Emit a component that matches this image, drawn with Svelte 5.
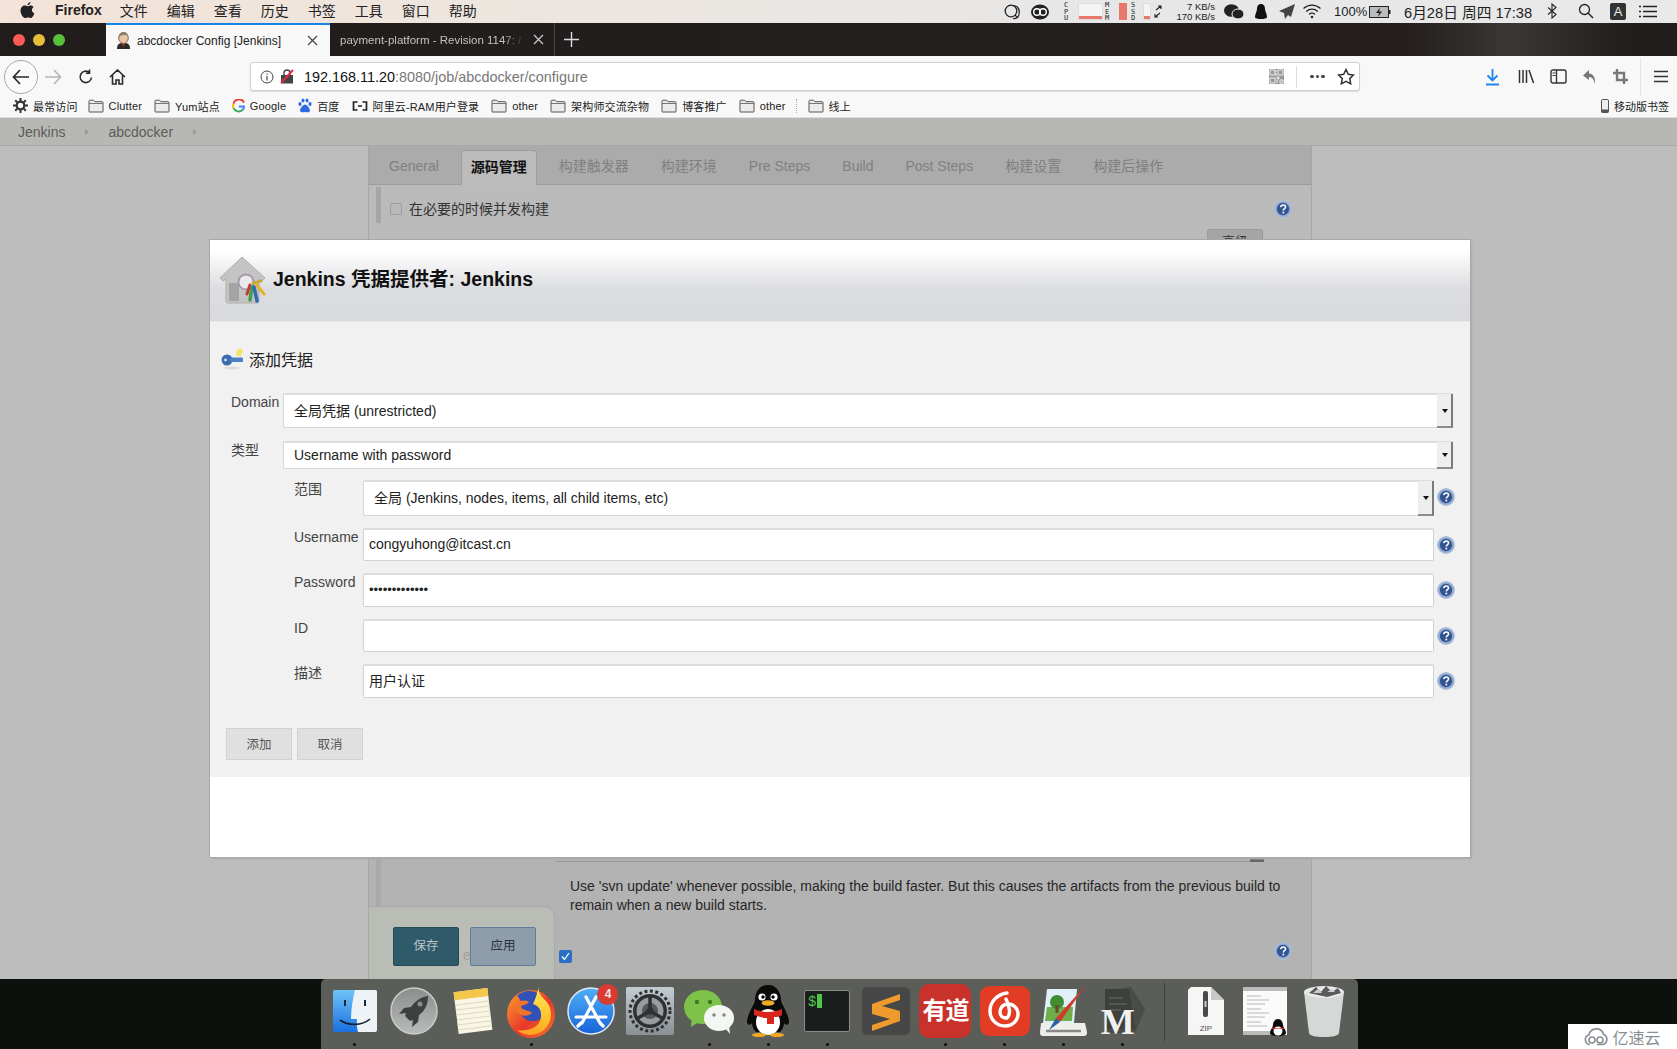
<script>
	const menus = ['文件', '编辑', '查看', '历史', '书签', '工具', '窗口', '帮助'];
	const tabs = ['General', '源码管理', '构建触发器', '构建环境', 'Pre Steps', 'Build', 'Post Steps', '构建设置', '构建后操作'];
	const marks = [
		{ label: 'Clutter' },
		{ label: 'Yum站点' },
		{ label: 'Google', icon: 'google' },
		{ label: '百度', icon: 'baidu' },
		{ label: '阿里云-RAM用户登录', icon: 'ali' },
		{ label: 'other' },
		{ label: '架构师交流杂物' },
		{ label: '博客推广' },
		{ label: 'other' }
	];
</script>

{#snippet help()}
	<svg class="help" width="18" height="18" viewBox="0 0 17 17">
		<circle cx="8.5" cy="8.5" r="7.9" fill="#8ea8d0" stroke="#b0c1dc" stroke-width="1" />
		<circle cx="8.5" cy="8.5" r="5.8" fill="#33558f" />
		<path d="M6.3 6.8c.2-1.5 1.2-2.1 2.4-2.1 1.3 0 2.2.8 2.2 1.9 0 1.6-2.1 1.6-2.1 3.2" fill="none" stroke="#fff" stroke-width="1.5" />
		<rect x="8" y="11" width="1.6" height="1.7" fill="#fff" />
	</svg>
{/snippet}

{#snippet folder()}
	<svg width="16" height="14" viewBox="0 0 16 14">
		<path d="M1 12.5V2.2C1 1.6 1.4 1.2 2 1.2h3.6l1.3 1.5H14c.6 0 1 .4 1 1v8.8c0 .3-.2.5-.5.5h-13c-.3 0-.5-.2-.5-.5z" fill="#ececec" stroke="#555" stroke-width="1" />
		<path d="M1 4.5h14" stroke="#777" stroke-width="1" />
	</svg>
{/snippet}

<div class="screen">
	<header class="menubar">
		<svg class="apple" width="15" height="17" viewBox="0 0 15 17">
			<path d="M10.4 0c.1 1.2-.9 3-2.900 3.200C7.300 1.800 8.700.2 10.400 0zM7.600 4.300c.8 0 1.700-.8 3.100-.8 1.100 0 2.300.6 3 1.600-2.600 1.500-2.200 5.200.6 6.300-.6 1.700-2 4.600-3.600 4.600-.9 0-1.400-.6-2.700-.6s-1.800.6-2.700.6C3.300 16 .5 12.200.5 8.700c0-3.100 2-5.100 4.100-5.100 1.300 0 2.300.7 3 .7z" fill="#222" />
		</svg>
		<b class="app">Firefox</b>
		{#each menus as m}
			<span class="menu">{m}</span>
		{/each}

		<div class="status">
			<svg class="st" style="left:1003px" width="18" height="18" viewBox="0 0 18 18"><circle cx="8" cy="8" r="5.800" fill="none" stroke="#222" stroke-width="1.300" /><path d="M12 12l3 3M11 2.500c4 1 6 4 5 9-.5 3-3 4.500-6 4" fill="none" stroke="#222" stroke-width="1.200" /></svg>
			<svg class="st" style="left:1030px" width="20" height="18" viewBox="0 0 20 18"><ellipse cx="10" cy="9" rx="9" ry="7.500" fill="#222" /><circle cx="7" cy="9" r="3.300" fill="none" stroke="#fff" stroke-width="1.400" /><circle cx="13" cy="9" r="3.300" fill="none" stroke="#fff" stroke-width="1.400" /></svg>
			<span class="vert" style="left:1064px">CPU</span>
			<div class="graph" style="left:1078px;width:25px"><i></i></div>
			<span class="vert" style="left:1105px">MEM</span>
			<div class="membar"></div>
			<span class="vert" style="left:1131px">SSD</span>
			<div class="graph" style="left:1143px;width:8px"><i></i></div>
			<svg class="st" style="left:1153px;top:5px" width="10" height="13" viewBox="0 0 10 13"><path d="M3 5l5-4M5 1h3v3M7 8l-5 4M5 12H2V9" fill="none" stroke="#222" stroke-width="1.100" /></svg>
			<div class="speed">7 KB/s<br />170 KB/s</div>
			<svg class="st" style="left:1223px" width="22" height="18" viewBox="0 0 22 18"><ellipse cx="8.500" cy="7.500" rx="7.500" ry="6.300" fill="#222" /><ellipse cx="15" cy="11" rx="6" ry="5" fill="#222" stroke="#eee" /></svg>
			<svg class="st" style="left:1253px" width="16" height="18" viewBox="0 0 16 18"><path d="M8 1c3 0 4 2.500 4 5 0 2 2 5 2 8 0 1.500-3 2-6 2s-6-.5-6-2c0-3 2-6 2-8 0-2.500 1-5 4-5z" fill="#111" /></svg>
			<svg class="st" style="left:1278px" width="18" height="18" viewBox="0 0 18 18"><path d="M17 1L1 8l5 2 1 6 3-4 3 2z" fill="#444" /></svg>
			<svg class="st" style="left:1302px" width="20" height="16" viewBox="0 0 20 16"><path d="M1.500 5.500c5-4.500 12-4.500 17 0M4.200 8.500c3.500-3 8.100-3 11.600 0M7 11.300c2-1.500 4-1.500 6 0" fill="none" stroke="#222" stroke-width="1.300" /><circle cx="10" cy="14" r="1.300" fill="#222" /></svg>
			<span class="t12" style="left:1334px">100%</span>
			<svg class="st" style="left:1369px;top:6px" width="22" height="12" viewBox="0 0 22 12"><rect x=".5" y=".5" width="19" height="11" fill="#bbb" stroke="#222" /><rect x="20" y="4" width="1.500" height="4" fill="#222" /><path d="M11 1.500L7 7h3l-1 4 4-5.500h-3z" fill="#222" /></svg>
			<span class="date" style="left:1404px">6月28日 周四 17:38</span>
			<svg class="st" style="left:1547px" width="10" height="16" viewBox="0 0 10 16"><path d="M1 4.500l8 7-4 3.500V1l4 3.500-8 7" fill="none" stroke="#222" stroke-width="1.100" /></svg>
			<svg class="st" style="left:1578px" width="16" height="16" viewBox="0 0 16 16"><circle cx="6.500" cy="6.500" r="5" fill="none" stroke="#222" stroke-width="1.300" /><path d="M10 10l5 5" stroke="#222" stroke-width="1.400" /></svg>
			<span class="ime">A</span>
			<svg class="st" style="left:1639px;top:5px" width="18" height="13" viewBox="0 0 18 13"><path d="M0 1.500h2M4 1.500h14M0 6.500h2M4 6.500h14M0 11.500h2M4 11.500h14" stroke="#222" stroke-width="1.500" /></svg>
		</div>
	</header>

	<div class="tabbar">
		<div class="lights"><i style="background:#fc5b57"></i><i style="background:#e5bf3c"></i><i style="background:#57c038"></i></div>
		<div class="tab on">
			<svg width="15" height="17" viewBox="0 0 15 17">
				<path d="M1 17c0-5 2-6 6.500-6s6.500 1 6.500 6z" fill="#2e2a2a" />
				<path d="M6 11l1.500 4L9 11z" fill="#c33" />
				<ellipse cx="7.500" cy="6" rx="4.800" ry="5.500" fill="#eac4a3" stroke="#6b5040" stroke-width=".8" />
				<path d="M3 5c0-4 3-5 5-5s4 2 4 4c-2-1.500-6-1.500-9 1z" fill="#8a8078" />
			</svg>
			<span>abcdocker Config [Jenkins]</span>
			<svg class="x" width="11" height="11" viewBox="0 0 11 11"><path d="M1 1l9 9M10 1l-9 9" stroke="#444" stroke-width="1.200" /></svg>
		</div>
		<div class="tab off">
			<span>payment-platform - Revision 1147: /</span>
			<svg class="x" width="11" height="11" viewBox="0 0 11 11"><path d="M1 1l9 9M10 1l-9 9" stroke="#ccc" stroke-width="1.200" /></svg>
		</div>
		<svg class="plus" width="15" height="15" viewBox="0 0 15 15"><path d="M7.500 0v15M0 7.500h15" stroke="#ddd" stroke-width="1.400" /></svg>
	</div>

	<div class="toolbar">
		<div class="back">
			<svg width="18" height="16" viewBox="0 0 18 16"><path d="M8 1L1.500 8 8 15M2 8h15" fill="none" stroke="#2a2a2a" stroke-width="1.700" /></svg>
		</div>
		<svg class="fwd" width="18" height="16" viewBox="0 0 18 16"><path d="M10 1l6.500 7-6.500 7M16 8H1" fill="none" stroke="#b5b5b5" stroke-width="1.600" /></svg>
		<svg class="reload" width="16" height="16" viewBox="0 0 16 16"><path d="M13.500 8.500a5.700 5.700 0 1 1-2-5M11.500 .5v3.700H7.800" fill="none" stroke="#2a2a2a" stroke-width="1.600" /></svg>
		<svg class="home" width="17" height="16" viewBox="0 0 17 16"><path d="M1 8l7.500-7L16 8M3.500 6.500V15h3.500v-4h3v4h3.500V6.500" fill="none" stroke="#2a2a2a" stroke-width="1.600" /></svg>
		<div class="url">
			<svg width="14" height="14" viewBox="0 0 14 14"><circle cx="7" cy="7" r="6" fill="none" stroke="#444" /><path d="M7 6v4.500M7 3.500v1.200" stroke="#444" stroke-width="1.200" /></svg>
			<svg class="lock" width="14" height="15" viewBox="0 0 14 15"><rect x="1" y="6" width="12" height="8.500" fill="#444" /><path d="M4 6V4a3 3 0 0 1 6 0v2" fill="none" stroke="#444" stroke-width="1.400" /><path d="M1 14L13 1" stroke="#e2284a" stroke-width="2" /></svg>
			<span class="addr"><b>192.168.11.20</b>:8080/job/abcdocker/configure</span>
			<svg class="qr" width="15" height="15" viewBox="0 0 15 15"><rect width="15" height="15" fill="#999" /><path d="M1 1h5v5H1zM9 1h5v5H9zM1 9h5v5H1zM8 8h2v2H8zM11 11h3v3h-3zM7 1v2M7 4v3M8 11v3" fill="none" stroke="#eee" /></svg>
			<i class="urlsep"></i>
			<span class="dots"><i></i><i></i><i></i></span>
			<svg class="star" width="18" height="17" viewBox="0 0 18 17"><path d="M9 1.500l2.300 4.800 5.200.7-3.800 3.600 1 5.200L9 13.300l-4.700 2.500 1-5.200L1.500 7l5.200-.7z" fill="none" stroke="#333" stroke-width="1.500" /></svg>
		</div>
		<svg class="tool" style="margin-left:125px" width="15" height="18" viewBox="0 0 15 18"><path d="M7.500 1v11M2.500 7.500l5 5 5-5M1 16.500h13" fill="none" stroke="#1c86ee" stroke-width="1.800" /></svg>
		<svg class="tool" style="margin-left:18px" width="17" height="15" viewBox="0 0 17 15"><path d="M1.500 1v13M5 1v13M8.500 1v13M11 1l4.500 13" fill="none" stroke="#333" stroke-width="1.500" /></svg>
		<svg class="tool" style="margin-left:15px" width="17" height="15" viewBox="0 0 17 15"><rect x="1" y="1" width="15" height="13" rx="2" fill="none" stroke="#333" stroke-width="1.400" /><path d="M6.500 1v13" stroke="#333" stroke-width="1.400" /><path d="M2.500 4h3M2.500 6.500h3" stroke="#333" /></svg>
		<svg class="tool" style="margin-left:15px" width="15" height="16" viewBox="0 0 15 16"><path d="M7 1L1 6.500 7 11V8c3 0 5 2 5.500 7 1.500-6-1-10-5.500-10.500z" fill="#777" /></svg>
		<svg class="tool" style="margin-left:16px" width="15" height="15" viewBox="0 0 15 15"><path d="M4 0v11h11M0 4h11v11" fill="none" stroke="#777" stroke-width="2.400" /></svg>
		<i class="toolsep"></i>
		<svg class="tool" style="margin-left:13px" width="14" height="13" viewBox="0 0 14 13"><path d="M0 1.500h14M0 6.500h14M0 11.500h14" stroke="#333" stroke-width="1.600" /></svg>
	</div>

	<nav class="bookmarks">
		<span class="mark first">
			<svg width="15" height="15" viewBox="0 0 15 15"><circle cx="7.500" cy="7.500" r="3.800" fill="none" stroke="#333" stroke-width="2.200" /><path d="M7.500 0v3M7.500 12v3M0 7.500h3M12 7.500h3M2.200 2.200l2 2M10.800 10.800l2 2M12.800 2.200l-2 2M4.200 10.800l-2 2" stroke="#333" stroke-width="2" /></svg>
			最常访问
		</span>
		{#each marks as m}
			<span class="mark">
				{#if m.icon === 'google'}
					<svg width="13" height="14" viewBox="0 0 13 14"><path d="M12 3.500A5.600 5.600 0 0 0 1.500 4.800" fill="none" stroke="#e94235" stroke-width="2" /><path d="M1.500 4.800a5.800 5.800 0 0 0 0 4.400" fill="none" stroke="#fabb05" stroke-width="2" /><path d="M1.500 9.200A5.700 5.700 0 0 0 10.500 11" fill="none" stroke="#34a853" stroke-width="2" /><path d="M10.500 11c1-1 1.500-2 1.500-3.500H6.800" fill="none" stroke="#4285f4" stroke-width="2" /></svg>
				{:else if m.icon === 'baidu'}
					<svg width="14" height="15" viewBox="0 0 14 15"><g fill="#2f6be0"><ellipse cx="2" cy="6" rx="1.600" ry="2" /><ellipse cx="5" cy="2.500" rx="1.500" ry="2.100" /><ellipse cx="9" cy="2.500" rx="1.500" ry="2.100" /><ellipse cx="12" cy="6" rx="1.600" ry="2" /><path d="M7 6.500c2 0 5 4 5 6 0 2-3 2-5 1.500-2 .5-5 .5-5-1.500 0-2 3-6 5-6z" /></g></svg>
				{:else if m.icon === 'ali'}
					<svg width="16" height="10" viewBox="0 0 16 10"><path d="M5.500 1H1.500v8h4M10.500 1h4v8h-4M6 5h4" fill="none" stroke="#222" stroke-width="1.700" /></svg>
				{:else}
					{@render folder()}
				{/if}
				{m.label}
			</span>
		{/each}
		<i class="marksep"></i>
		<span class="mark">{@render folder()} 线上</span>
		<span class="mark mobile">
			<svg width="8" height="14" viewBox="0 0 8 14"><rect x=".5" y=".5" width="7" height="13" rx="1.200" fill="#eee" stroke="#555" /><rect x=".5" y="10.500" width="7" height="3" fill="#555" /></svg>
			移动版书签
		</span>
	</nav>

	<div class="crumbs">
		<span>Jenkins</span><i></i><span>abcdocker</span><i></i>
	</div>

	<main class="page">
		<section class="panel">
			<div class="tabs">
				{#each tabs as t, i}
					<span class="ptab" class:active={i === 1}>{t}</span>
				{/each}
			</div>
			<div class="row">
				<i class="strip"></i>
				<i class="check"></i>
				<span class="rowlabel">在必要的时候并发构建</span>
				{@render help()}
			</div>
			<div class="advanced">高级</div>

			<div class="lower">
				<div class="selectline"></div>
				<p>Use 'svn update' whenever possible, making the build faster. But this causes the artifacts from the previous build to remain when a new build starts.</p>
				<div class="lastrow">
					<svg class="blue" width="13" height="13" viewBox="0 0 13 13"><rect width="13" height="13" rx="2" fill="#2a6fc4" /><path d="M3 6.500l2.500 3L10 3" fill="none" stroke="#fff" stroke-width="1.300" /></svg>
					{@render help()}
				</div>
			</div>

			<div class="bottombar">
				<button class="save">保存</button>
				<button class="apply">应用</button>
				<span class="hidden">e</span>
			</div>
		</section>
	</main>

	<footer class="desktop">
		<div class="dock">
			<div class="cell dot">
				<svg width="44" height="42" viewBox="0 0 44 42">
					<defs><linearGradient id="fin" x1="0" y1="0" x2="0" y2="1"><stop offset="0" stop-color="#6fc4f7" /><stop offset="1" stop-color="#1a70e0" /></linearGradient></defs>
					<rect width="44" height="42" rx="2" fill="url(#fin)" />
					<path d="M22 0h20a2 2 0 0 1 2 2v38a2 2 0 0 1-2 2H25c-1-4-1.500-8-1-13h-6c0-11 2-20 4-29z" fill="#eef3f8" />
					<path d="M12 10v6M32 10v6" stroke="#1c2a3a" stroke-width="2" />
					<path d="M7 30c8 6 22 6 30-1" fill="none" stroke="#14202e" stroke-width="1.600" />
				</svg>
			</div>
			<div class="cell">
				<svg width="48" height="48" viewBox="0 0 48 48">
					<defs><linearGradient id="lp" x1="0" y1="0" x2="0" y2="1"><stop offset="0" stop-color="#8c8e8e" /><stop offset="1" stop-color="#b9baba" /></linearGradient></defs>
					<circle cx="24" cy="24" r="23" fill="url(#lp)" stroke="#c9caca" stroke-width="1.500" />
					<path d="M38 9c-7 1-13 5-17 11l-7 1-5 6 7-1c-1 2-1 3 0 4l3 3c1 1 2 1 4 0l-1 7 6-5 1-7c6-4 9-11 9-19z" fill="#3d3f40" />
					<circle cx="30" cy="17" r="2.500" fill="#8c8e8e" />
				</svg>
			</div>
			<div class="cell">
				<svg width="44" height="50" viewBox="0 0 44 50">
					<g transform="rotate(-7 22 25)">
						<rect x="5" y="4" width="34" height="42" fill="#faf6e6" />
						<rect x="5" y="4" width="34" height="8" fill="#f4c64a" />
						<path d="M5 17h34M5 22h34M5 27h34M5 32h34M5 37h34M5 42h34" stroke="#ddd6bf" />
					</g>
				</svg>
			</div>
			<div class="cell dot">
				<svg width="52" height="54" viewBox="0 0 52 54">
					<defs>
						<linearGradient id="ffx" x1="0" y1="0" x2="1" y2="1"><stop offset="0" stop-color="#ffa52a" /><stop offset=".55" stop-color="#e8382c" /><stop offset="1" stop-color="#f7762a" /></linearGradient>
						<linearGradient id="ffy" x1="0" y1="0" x2="0" y2="1"><stop offset="0" stop-color="#ffec55" /><stop offset=".7" stop-color="#ffc02e" /><stop offset="1" stop-color="#ff9f22" /></linearGradient>
					</defs>
					<circle cx="25" cy="30" r="24" fill="url(#ffx)" />
					<path d="M11 12c5-5 12-6 18-4 7 3 11 9 11 16 0 8-6 13-13 13-8 0-13-5-13-12 0-6 2-9 -3-13z" fill="#3150b8" />
					<path d="M33 0c-2 8 2 12 7 17 7 7 7 21-2 29-7 6-19 7-27 0 10 2 20-2 23-9 3-8 0-15-7-17 3-6 5-13 6-20z" fill="url(#ffy)" />
					<path d="M10 19c4-3 9-3 13-1-3 4-7 2-8 5 2 4 8 3 11 6-3 3-10 4-14 0-3-3-4-7-2-10z" fill="#f2732a" />
				</svg>
			</div>
			<div class="cell">
				<svg width="48" height="48" viewBox="0 0 48 48">
					<defs><linearGradient id="as" x1="0" y1="0" x2="0" y2="1"><stop offset="0" stop-color="#4fb0f8" /><stop offset="1" stop-color="#1763d8" /></linearGradient></defs>
					<circle cx="24" cy="24" r="23" fill="url(#as)" stroke="#dfe9f4" stroke-width="1.500" />
					<path d="M29 10L15 36M19 10l14 26M9 30h30M14 36l-3 3M33 36l3 3" fill="none" stroke="#fff" stroke-width="3.200" stroke-linecap="round" />
				</svg>
				<span class="badge">4</span>
			</div>
			<div class="cell">
				<svg width="48" height="48" viewBox="0 0 48 48">
					<defs><linearGradient id="pr" x1="0" y1="0" x2="0" y2="1"><stop offset="0" stop-color="#c3ccd2" /><stop offset="1" stop-color="#8a9094" /></linearGradient></defs>
					<rect width="48" height="48" rx="2" fill="url(#pr)" />
					<circle cx="24" cy="24" r="20" fill="none" stroke="#2e3033" stroke-width="3" stroke-dasharray="3 2.500" />
					<circle cx="24" cy="24" r="17" fill="#2e3033" />
					<circle cx="24" cy="24" r="13.500" fill="#9a9da0" />
					<circle cx="24" cy="24" r="8" fill="#55585a" />
					<path d="M24 24V10M24 24L12 31M24 24l12 7" stroke="#2e3033" stroke-width="3.500" />
					<circle cx="24" cy="24" r="3.500" fill="#2e3033" />
				</svg>
			</div>
			<div class="cell dot">
				<svg width="52" height="46" viewBox="0 0 52 46">
					<ellipse cx="20" cy="19" rx="19" ry="17" fill="#7ec24a" />
					<path d="M9 30l-1 9 9-6z" fill="#7ec24a" />
					<circle cx="14" cy="14" r="2.200" fill="#3e7a22" />
					<circle cx="27" cy="14" r="2.200" fill="#3e7a22" />
					<ellipse cx="36" cy="30" rx="15" ry="13" fill="#f4f6f4" />
					<path d="M42 40l5 6-1-9z" fill="#f4f6f4" />
					<circle cx="31" cy="27" r="1.800" fill="#888" />
					<circle cx="41" cy="27" r="1.800" fill="#888" />
				</svg>
			</div>
			<div class="cell dot">
				<svg width="44" height="52" viewBox="0 0 44 52">
					<path d="M22 0c9 0 13 8 13 15 0 4 8 14 8 22 0 3-3 4-5 1 0 4-2 7-4 9H10c-2-2-4-5-4-9-2 3-5 2-5-1 0-8 8-18 8-22C9 8 13 0 22 0z" fill="#0a0a0a" />
					<ellipse cx="22" cy="37" rx="12" ry="13" fill="#fff" />
					<circle cx="16" cy="12" r="3.600" fill="#fff" /><circle cx="28" cy="12" r="3.600" fill="#fff" />
					<circle cx="17" cy="12" r="1.700" /><circle cx="27" cy="12" r="1.700" />
					<ellipse cx="22" cy="18" rx="6.500" ry="2.800" fill="#f3a91f" />
					<path d="M8 24c9 4 19 4 28 0v6c-3 2-5 2-8 2v7h-7v-6c-5 0-9-2-13-3z" fill="#d8261c" />
					<ellipse cx="13" cy="50" rx="7" ry="2" fill="#f3a91f" /><ellipse cx="31" cy="50" rx="7" ry="2" fill="#f3a91f" />
				</svg>
			</div>
			<div class="cell dot">
				<div class="term"><span>$</span><i></i></div>
			</div>
			<div class="cell">
				<svg width="48" height="48" viewBox="0 0 48 48">
					<rect width="48" height="48" rx="5" fill="#474747" />
					<path d="M38 7L10 17v10l18 5-18 6v6l28-10V24L20 19l18-6z" fill="#ee9a2c" />
				</svg>
			</div>
			<div class="cell dot"><div class="youdao">有道</div></div>
			<div class="cell dot">
				<svg width="50" height="50" viewBox="0 0 50 50">
					<rect width="50" height="50" rx="9" fill="#e23d24" />
					<path d="M27 7c-9 1-17 8-17 18 0 9 7 15 15 15s13-6 13-12-5-10-10-10-8 4-8 8 3 6 6 6M26 13c1 2 2 4 3 9 1 4 0 8-2 10" fill="none" stroke="#fff" stroke-width="3.400" stroke-linecap="round" />
				</svg>
			</div>
			<div class="cell dot">
				<svg width="48" height="52" viewBox="0 0 48 52">
					<path d="M7 4h30l-3 34H3z" fill="#dff0f8" />
					<path d="M7 22h26l-1 14H5z" fill="#6fae4a" />
					<circle cx="17" cy="17" r="7" fill="#3f8d30" />
					<rect x="15.500" y="20" width="3" height="8" fill="#6b4a2a" />
					<path d="M1 38h44l2 9c0 3-1 4-3 4H3c-2 0-3-1-3-4z" fill="#eeeeea" />
					<path d="M6 46h35" stroke="#888" stroke-width="2.400" />
					<path d="M46 0L16 33l4 4z" fill="#cf3a2a" />
					<path d="M16 33l-7 12 11-8z" fill="#2a5fa8" />
				</svg>
			</div>
			<div class="cell dot">
				<div class="marked">
					<svg width="48" height="50" viewBox="0 0 48 50">
						<path d="M6 4l26-3 14 22-10 24H6z" fill="#4a4c4a" />
						<path d="M6 3h24l6 40H6z" fill="#3e403e" />
						<path d="M10 12h14M10 18h18M10 24h12" stroke="#6a6c6a" stroke-width="1.200" />
					</svg>
					<span>M</span>
				</div>
			</div>
			<i class="docksep"></i>
			<div class="cell">
				<div class="zip">
					<svg width="36" height="48" viewBox="0 0 36 48">
						<path d="M3 0h20l13 13v35H0V3z" fill="#f6f6f6" />
						<path d="M23 0l13 13H23z" fill="#c9c9c9" />
						<rect x="15" y="4" width="5" height="26" rx="2" fill="#4a4a4a" />
						<rect x="16.500" y="14" width="2" height="6" fill="#ccc" />
					</svg>
					<span>ZIP</span>
				</div>
			</div>
			<div class="cell">
				<svg width="48" height="50" viewBox="0 0 48 50">
					<rect x="2" y="1" width="44" height="48" fill="#fafafa" />
					<rect x="2" y="1" width="44" height="4" fill="#bbb" />
					<path d="M6 10h14M6 14h22M6 18h18M6 23h14M6 27h22M6 31h18M6 36h14M6 40h20" stroke="#b8b8b8" />
					<rect x="2" y="45" width="30" height="4" fill="#bbb" />
					<path d="M37 33c3 0 5 3 5 6 0 2 3 5 3 8 0 2-3 3-8 3s-8-1-8-3c0-3 3-6 3-8 0-3 2-6 5-6z" fill="#0a0a0a" />
					<ellipse cx="37" cy="45" rx="4.500" ry="4.500" fill="#fff" />
					<path d="M31 41c4 2 8 2 12 0v2h-12z" fill="#d8261c" />
				</svg>
			</div>
			<div class="cell">
				<svg width="42" height="52" viewBox="0 0 42 52">
					<path d="M1 7l5 41c.5 2.500 6 4 15 4s14.500-1.500 15-4l5-41z" fill="#d6d8d8" />
					<ellipse cx="21" cy="7" rx="20" ry="6" fill="#e8e9e9" />
					<path d="M6 8l7-6 5 5 5-6 6 6 6-4 3 5-14 4z" fill="#5c5a58" />
					<path d="M10 8l5-4 4 4zM24 7l5-3 3 3z" fill="#c9ced4" />
				</svg>
			</div>
		</div>
	</footer>

	<div class="modal">
		<div class="mhead">
			<svg width="47" height="47" viewBox="0 0 47 47">
				<path d="M22 0L0 21l3 3 3-2v22c0 1 1 2 2 2h29c1 0 2-1 2-2V22l3 2 3-3z" fill="#c4c4c4" stroke="#adadad" />
				<rect x="9" y="26" width="10" height="18" fill="#a4a4a4" />
				<circle cx="26" cy="25" r="7.500" fill="#e9e9ee" stroke="#a596ac" stroke-width="1.800" />
				<g fill="none" stroke-linecap="round">
					<path d="M33 26l8-2" stroke="#c9a92c" stroke-width="2.500" />
					<path d="M30 28l-3 9" stroke="#c9372f" stroke-width="3" />
					<path d="M32 30l-2 13" stroke="#3fa14a" stroke-width="3.500" />
					<path d="M34 30l3 14" stroke="#3269b0" stroke-width="3.500" />
					<path d="M36 27l8 10" stroke="#e0b428" stroke-width="3" />
				</g>
			</svg>
			<h2>Jenkins 凭据提供者: Jenkins</h2>
		</div>
		<div class="mbody">
			<div class="heading">
				<svg width="23" height="22" viewBox="0 0 23 22">
					<ellipse cx="11" cy="20" rx="8" ry="1.500" fill="#dcdcdc" />
					<circle cx="6" cy="12" r="5.500" fill="#3b6cb0" />
					<rect x="9" y="9.500" width="13" height="4.500" rx="1" fill="#4d80c4" />
					<circle cx="4.500" cy="12" r="1.400" fill="#cfe0f2" />
					<path d="M19 0l3 3-2 5h-4l-1-4z" fill="#f4e566" />
				</svg>
				<span>添加凭据</span>
			</div>
			<div class="form">
				<div class="outer">
					<label for="dom">Domain</label>
					<div class="sel tall">
						<select id="dom"><option>全局凭据 (unrestricted)</option></select>
					</div>
				</div>
				<div class="outer">
					<label for="kind">类型</label>
					<div class="sel short">
						<select id="kind"><option>Username with password</option></select>
					</div>
				</div>
				<div class="inner">
					<label for="scope">范围</label>
					<div class="sel scope">
						<select id="scope"><option>全局 (Jenkins, nodes, items, all child items, etc)</option></select>
					</div>
					{@render help()}

					<label for="user">Username</label>
					<input id="user" value="congyuhong@itcast.cn" />
					{@render help()}

					<label for="pass">Password</label>
					<input id="pass" type="password" value="aaaaaaaaaaaaa" />
					{@render help()}

					<label for="uid">ID</label>
					<input id="uid" />
					{@render help()}

					<label for="desc">描述</label>
					<input id="desc" value="用户认证" />
					{@render help()}
				</div>
			</div>
			<div class="actions">
				<button>添加</button>
				<button>取消</button>
			</div>
		</div>
	</div>

	<div class="brand">
		<svg width="25" height="19" viewBox="0 0 25 19">
			<path d="M6 17.500a5 5 0 0 1-1-9.800 7.500 7.500 0 0 1 14.500-.5 5.500 5.500 0 0 1-.5 10.300h-6" fill="none" stroke="#8a8f94" stroke-width="1.700" />
			<circle cx="8" cy="13" r="3" fill="none" stroke="#8a8f94" stroke-width="1.600" />
			<circle cx="16" cy="13" r="3" fill="none" stroke="#8a8f94" stroke-width="1.600" />
		</svg>
		<span>亿速云</span>
	</div>
</div>

<style>
	:global(body) {
		margin: 0;
		background: #0d110e;
	}

	.screen {
		position: relative;
		width: 1677px;
		height: 1049px;
		overflow: hidden;
		font-family: 'Liberation Sans', 'Noto Sans CJK SC', sans-serif;
		font-size: 14px;
		color: #222;
	}

	/* mac menu bar */
	.menubar {
		height: 23px;
		display: flex;
		align-items: center;
		padding: 0 0 3px 20px;
		box-sizing: border-box;
		background: linear-gradient(90deg, #f3e3d8 0%, #ece6e0 35%, #e7e7e8 70%, #e9e9ea 100%);
		position: relative;
	}

	.apple {
		margin-right: 20px;
	}

	.app {
		margin-right: 18px;
		font-size: 14px;
		color: #222;
	}

	.menu {
		margin-right: 19px;
	}

	.status {
		position: absolute;
		inset: 0;
	}

	.st,
	.vert,
	.graph,
	.t12,
	.date,
	.ime,
	.speed,
	.membar {
		position: absolute;
	}

	.st {
		top: 3px;
	}

	.vert {
		top: 2px;
		width: 7px;
		font-family: 'DejaVu Sans Mono', monospace;
		font-size: 7px;
		line-height: 6.500px;
		word-break: break-all;
	}

	.graph {
		top: 3px;
		height: 17px;
		background: #f4f4f4;
		border: 1px solid #ddd;
		box-sizing: border-box;
	}

	.graph i {
		position: absolute;
		left: 0;
		right: 0;
		bottom: 0;
		height: 3px;
		background: #e8776c;
	}

	.membar {
		left: 1119px;
		top: 3px;
		width: 8px;
		height: 17px;
		background: #e8776c;
	}

	.speed {
		left: 1165px;
		top: 2px;
		width: 50px;
		text-align: right;
		font-size: 9.500px;
		line-height: 10px;
	}

	.t12 {
		top: 4px;
		font-size: 13px;
	}

	.date {
		top: 1px;
		font-size: 14.700px;
		white-space: nowrap;
	}

	.ime {
		left: 1610px;
		top: 3px;
		width: 16px;
		height: 17px;
		background: #333;
		color: #eee;
		border-radius: 2px;
		text-align: center;
		font-size: 13px;
		line-height: 17px;
	}

	/* browser */
	.tabbar {
		height: 33px;
		display: flex;
		align-items: stretch;
		background: linear-gradient(90deg, #211d1c 0%, #241f1e 84%, #3a3736 90%, #221e1d 97%);
	}

	.lights {
		width: 106px;
		display: flex;
		align-items: center;
		gap: 8px;
		padding-left: 13px;
		box-sizing: border-box;
	}

	.lights i {
		width: 12px;
		height: 12px;
		border-radius: 50%;
	}

	.tab {
		display: flex;
		align-items: center;
		font-size: 11.500px;
		white-space: nowrap;
		box-sizing: border-box;
	}

	.tab.on {
		width: 224px;
		padding-left: 10px;
		background: #f8f8f8;
		border-top: 2px solid #1583e6;
		color: #222;
	}

	.tab.on span {
		margin-left: 6px;
		font-size: 12px;
	}

	.tab.on .x {
		margin-left: auto;
		margin-right: 12px;
	}

	.tab.off {
		width: 225px;
		padding-left: 10px;
		color: #c4c2c1;
		border-right: 1px solid #4b4746;
		overflow: hidden;
	}

	.tab.off span {
		width: 192px;
		overflow: hidden;
		mask-image: linear-gradient(90deg, #000 85%, transparent 96%);
	}

	.tab.off .x {
		margin-left: 1px;
	}

	.plus {
		margin: 9px 0 0 9px;
	}

	.toolbar {
		height: 38px;
		display: flex;
		align-items: center;
		padding: 3px 0 0 4px;
		box-sizing: border-box;
		background: #f8f8f8;
	}

	.back {
		width: 32px;
		height: 32px;
		border: 1px solid #aaa;
		border-radius: 50%;
		background: #fafafa;
		display: flex;
		align-items: center;
		justify-content: center;
		flex: none;
	}

	.fwd {
		margin-left: 6px;
	}

	.reload {
		margin-left: 16px;
	}

	.home {
		margin-left: 15px;
	}

	.url {
		margin-left: 124px;
		width: 1110px;
		height: 29px;
		display: flex;
		align-items: center;
		padding-left: 9px;
		box-sizing: border-box;
		background: #fff;
		border: 1px solid #cfcfcf;
		border-radius: 3px;
		box-shadow: 0 1px 1px #ddd;
		flex: none;
	}

	.lock {
		margin-left: 6px;
	}

	.addr {
		margin-left: 10px;
		font-size: 14.400px;
		color: #777;
		width: 971px;
	}

	.addr b {
		font-weight: normal;
		color: #111;
	}

	.qr {
		margin-right: 12px;
		margin-left: -6px;
	}

	.urlsep {
		width: 1px;
		height: 22px;
		background: #ddd;
	}

	.dots {
		display: flex;
		gap: 2px;
		margin-left: 13px;
	}

	.dots i {
		width: 3.500px;
		height: 3.500px;
		border-radius: 50%;
		background: #444;
	}

	.star {
		margin-left: 12px;
	}

	.tool {
		flex: none;
	}

	.toolsep {
		width: 1px;
		height: 38px;
		background: #e6e6e6;
		margin-left: 12px;
	}

	.bookmarks {
		height: 24px;
		display: flex;
		align-items: center;
		gap: 12px;
		padding-left: 13px;
		background: #f8f8f8;
		border-bottom: 1px solid #ddd;
		box-sizing: border-box;
		font-size: 11px;
		letter-spacing: 0.150px;
		color: #222;
	}

	.mark {
		display: flex;
		align-items: center;
		gap: 5px;
		white-space: nowrap;
	}

	.first {
		margin-right: -2px;
	}

	.marksep {
		width: 1px;
		height: 14px;
		margin-left: -2px;
		margin-right: -2px;
		border-left: 1px dotted #aaa;
	}

	.mobile {
		margin-left: auto;
		margin-right: 8px;
		letter-spacing: 0;
	}

	.crumbs {
		height: 28px;
		display: flex;
		align-items: center;
		padding: 1px 0 0 18px;
		background: #b7b8b3;
		border-bottom: 1px solid #a9aaa6;
		box-sizing: border-box;
		color: #5b5c58;
	}

	.crumbs i {
		width: 0;
		height: 0;
		margin: 0 19px 0 20px;
		border-left: 4px solid #999a96;
		border-top: 3px solid transparent;
		border-bottom: 3px solid transparent;
	}

	/* jenkins page behind the dialog */
	.page {
		height: 833px;
		background: #bdbdbd;
		overflow: hidden;
	}

	.panel {
		position: relative;
		margin-left: 368px;
		width: 944px;
		height: 833px;
		box-sizing: border-box;
		display: flex;
		flex-direction: column;
		border-left: 1px solid #a6a6a6;
		border-right: 1px solid #a6a6a6;
		background: linear-gradient(#bbbbbb, #b2b2b2);
	}

	.tabs {
		height: 39px;
		box-sizing: border-box;
		display: flex;
		align-items: flex-end;
		gap: 12px;
		padding-left: 10px;
		background: #ababab;
		border-bottom: 1px solid #9d9d9d;
		color: #808080;
	}

	.ptab {
		height: 26px;
		padding: 0 10px;
		line-height: 25px;
		margin-bottom: 4px;
	}

	.ptab.active {
		height: 35px;
		line-height: 32px;
		margin-bottom: -1px;
		color: #111;
		font-weight: bold;
		background: #bbbbbb;
		border: 1px solid #9d9d9d;
		border-bottom: none;
		border-radius: 4px 4px 0 0;
		box-sizing: border-box;
		padding: 0 9px;
	}

	.row {
		height: 36px;
		margin-top: 2px;
		display: flex;
		align-items: center;
	}

	.strip {
		width: 5px;
		height: 36px;
		margin-left: 7px;
		background: #a6a6a6;
	}

	.check {
		width: 10px;
		height: 10px;
		margin: 7px 0 0 9px;
		border: 1px solid #9e9e9e;
		border-radius: 2px;
		background: #b9b9b9;
	}

	.rowlabel {
		margin: 5px 0 0 7px;
		color: #333;
	}

	.row :global(.help) {
		margin: 7px 19px 0 auto;
	}

	.advanced {
		width: 56px;
		height: 26px;
		margin: 6px 0 0 838px;
		background: #a5a5a5;
		border: 1px solid #999;
		box-sizing: border-box;
		border-radius: 2px;
		text-align: center;
		line-height: 24px;
		font-size: 13px;
		color: #333;
	}

	.lower {
		margin-top: auto;
		height: 128px;
		border-left: 5px solid #a9a9a9;
		margin-left: 7px;
		box-sizing: border-box;
	}

	.selectline {
		width: 708px;
		height: 11px;
		margin-left: 175px;
		box-sizing: border-box;
		border-bottom: 1px solid #999;
		position: relative;
	}

	.selectline::after {
		content: '';
		position: absolute;
		right: 0;
		bottom: -1px;
		width: 14px;
		height: 3px;
		background: #666;
	}

	.lower p {
		width: 730px;
		margin: 15px 0 0 189px;
		line-height: 19px;
		color: #262626;
	}

	.lastrow {
		display: flex;
		align-items: flex-start;
		height: 18px;
		margin-top: 30px;
	}

	.lastrow :global(.help) {
		margin: -3px 19px 0 auto;
	}

	.blue {
		margin: 5px 0 0 178px;
	}

	.bottombar {
		position: absolute;
		left: -1px;
		bottom: 0;
		width: 187px;
		height: 73px;
		display: flex;
		gap: 11px;
		padding: 20px 0 0 24px;
		box-sizing: border-box;
		background: #babcb6;
		border: 1px solid #a8aaa4;
		border-bottom: none;
		border-radius: 0 11px 0 0;
	}

	.bottombar button {
		width: 66px;
		height: 39px;
		padding: 0 0 4px;
		border-radius: 2px;
		font: 12.500px 'Liberation Sans', 'Noto Sans CJK SC', sans-serif;
		position: relative;
	}

	.save {
		background: #2f5a69;
		border: 1px solid #244a57;
		color: #b7c6cc;
	}

	.apply {
		background: #8e9dab;
		border: 1px solid #5f7d96;
		color: #27323c;
	}

	.hidden {
		position: absolute;
		left: 94px;
		top: 40px;
		color: #a2a4a0;
	}

	/* dock */
	.desktop {
		height: 70px;
		background: #0d110e;
		padding-left: 321px;
	}

	.dock {
		width: 1037px;
		height: 70px;
		box-sizing: border-box;
		padding-left: 4px;
		display: flex;
		background: #5b5d59;
		border-radius: 5px 5px 0 0;
	}

	.cell {
		position: relative;
		flex: none;
		width: 59.100px;
		height: 62px;
		display: flex;
		align-items: center;
		justify-content: center;
		padding-top: 2px;
		box-sizing: border-box;
	}

	.dot::after {
		content: '';
		position: absolute;
		left: 50%;
		bottom: -5px;
		width: 3px;
		height: 3px;
		margin-left: -1.500px;
		border-radius: 50%;
		background: #0c0c0c;
	}

	.badge {
		position: absolute;
		right: 2px;
		top: 5px;
		width: 21px;
		height: 21px;
		border-radius: 50%;
		background: #d93a32;
		color: #f5e6e4;
		font-size: 12px;
		font-weight: bold;
		line-height: 21px;
		text-align: center;
	}

	.term {
		width: 46px;
		height: 42px;
		background: #1c1d1d;
		border: 1px solid #8c8e8c;
		border-radius: 2px;
		box-sizing: border-box;
		display: flex;
		padding: 3px 0 0 3px;
		gap: 1px;
		color: #4fc54a;
		font-size: 14px;
		line-height: 15px;
	}

	.term i {
		width: 5px;
		height: 14px;
		background: #4fc54a;
	}

	.youdao {
		width: 52px;
		height: 54px;
		background: #c8322a;
		border-radius: 10px;
		color: #fff;
		font-size: 24px;
		font-weight: bold;
		line-height: 54px;
		text-align: center;
		letter-spacing: -1px;
		white-space: nowrap;
	}

	.marked {
		position: relative;
		width: 48px;
		height: 50px;
	}

	.marked span {
		position: absolute;
		left: 2px;
		bottom: -4px;
		font-family: 'Liberation Serif', serif;
		font-size: 36px;
		font-weight: bold;
		line-height: 36px;
		color: #f0f0ee;
	}

	.docksep {
		flex: none;
		width: 1px;
		height: 58px;
		margin: 4px 11px 0 12px;
		background: #3f413e;
	}

	.zip {
		position: relative;
		width: 36px;
		height: 48px;
	}

	.zip span {
		position: absolute;
		left: 0;
		right: 0;
		bottom: 2px;
		text-align: center;
		font-size: 8px;
		color: #555;
	}

	/* credentials dialog */
	.modal {
		position: absolute;
		left: 210px;
		top: 240px;
		width: 1260px;
		height: 617px;
		background: #fff;
		box-shadow: 0 0 0 1px #a8a8a8, 2px 2px 2px #ababab;
		display: flex;
		flex-direction: column;
	}

	.mhead {
		height: 82px;
		flex: none;
		box-sizing: border-box;
		display: flex;
		align-items: flex-start;
		padding: 17px 0 0 10px;
		background: linear-gradient(#fff 0%, #fff 14%, #dcdde0 60%, #d9dadc 100%);
		border-bottom: 1px solid #e6e6e6;
	}

	.mhead h2 {
		margin: 9px 0 0 6px;
		font-size: 19.500px;
		line-height: 26px;
		color: #111;
	}

	.mbody {
		height: 455px;
		flex: none;
		box-sizing: border-box;
		background: #f1f1f1;
		padding-top: 26px;
	}

	.heading {
		display: flex;
		align-items: center;
		gap: 5px;
		padding-left: 11px;
		height: 22px;
		font-size: 16px;
		color: #222;
	}

	.form {
		margin: 23px 15px 0 21px;
		color: #444;
	}

	label {
		line-height: 18px;
	}

	.outer {
		display: grid;
		grid-template-columns: 52px 1fr;
		margin-right: 2px;
		margin-bottom: 13px;
	}

	.inner {
		display: grid;
		grid-template-columns: 69px 1fr 21px;
		row-gap: 12px;
		align-items: start;
		margin-left: 63px;
		margin-top: -2px;
	}

	.inner :global(.help) {
		justify-self: end;
		margin-top: 8px;
	}

	.sel {
		position: relative;
	}

	.sel::after {
		content: '';
		position: absolute;
		right: 0;
		top: 1px;
		bottom: 0;
		width: 14px;
		background-color: #eee;
		border-right: 2px solid #7a7a7a;
		border-bottom: 2px solid #8c8c8c;
	}

	.sel::before {
		content: '';
		position: absolute;
		z-index: 1;
		right: 5px;
		top: 50%;
		margin-top: -2px;
		border-top: 4px solid #111;
		border-left: 3px solid transparent;
		border-right: 3px solid transparent;
	}

	select {
		display: block;
		width: 100%;
		appearance: none;
		box-sizing: border-box;
		padding: 0 0 1px 10px;
		background: #fff;
		border: 1px solid #d6d6d6;
		border-top: 2px solid #ddd;
		border-radius: 2px;
		font: 14px 'Liberation Sans', 'Noto Sans CJK SC', sans-serif;
		color: #222;
	}

	.tall select {
		height: 35px;
	}

	.short select {
		height: 28px;
	}

	.scope select {
		height: 36px;
	}

	input {
		display: block;
		width: 100%;
		height: 33.400px;
		box-sizing: border-box;
		padding: 0 5px 2px;
		background: #fff;
		border: 1px solid #d2d2d2;
		border-top: 2px solid #ddd;
		border-radius: 2px;
		font: 14px 'Liberation Sans', 'Noto Sans CJK SC', sans-serif;
		color: #222;
	}

	#pass {
		font-size: 13px;
	}

	.actions {
		display: flex;
		gap: 5px;
		margin: 30px 0 0 16px;
	}

	.actions button {
		width: 66px;
		height: 32px;
		background: #e0e0e0;
		border: 1px solid #d2d2d2;
		font: 12.500px 'Liberation Sans', 'Noto Sans CJK SC', sans-serif;
		color: #555;
	}

	.brand {
		position: absolute;
		right: 0;
		bottom: 0;
		width: 109px;
		height: 25px;
		background: #fff;
		display: flex;
		align-items: center;
		justify-content: center;
		gap: 3px;
		font-size: 16px;
		color: #8a8f94;
	}
</style>
